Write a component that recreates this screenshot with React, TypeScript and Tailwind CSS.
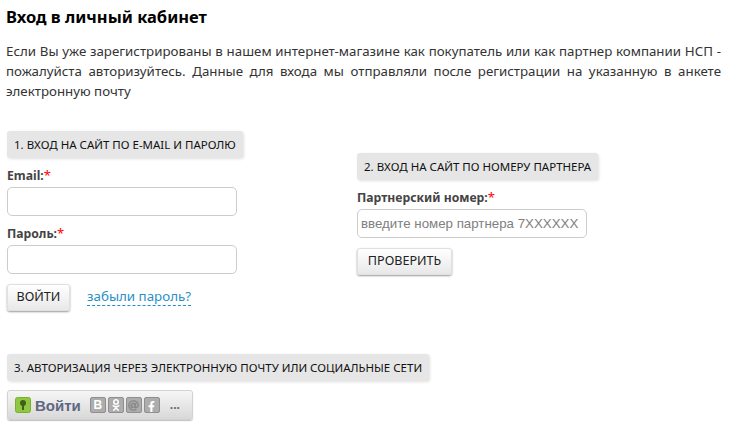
import type { ReactNode } from 'react'
import { FaAt, FaFacebookF, FaOdnoklassniki } from 'react-icons/fa'

const font = { fontFamily: '"Noto Sans", sans-serif' }

function SectionTitle({ children }: { children: string }) {
  return (
    <div className="inline-block h-[27px] rounded-[3px] bg-[#e6e6e6] px-[7px] text-[11.5px] leading-[27px] whitespace-nowrap text-[#111] shadow-[1px_1px_3px_rgba(0,0,0,0.12)]">
      {children}
    </div>
  )
}

function Field({ label, placeholder, className }: { label: string; placeholder?: string; className?: string }) {
  return (
    <div className={className}>
      <div className="h-[20px] text-[12.2px] leading-[21px] font-bold text-[#444]">
        {label}<span className="text-[13px] font-normal text-[#f00]">*</span>
      </div>
      <input
        placeholder={placeholder}
        className="mt-[2px] block h-[29px] w-[230px] rounded-[5px] border border-[#ccc] bg-white px-[3px] font-['Liberation_Sans'] text-[13.3px] text-[#333] placeholder:text-[#808080]"
      />
    </div>
  )
}

function Btn({ children, className }: { children: string; className: string }) {
  return (
    <button className={`h-[27px] rounded-[3px] border border-[#e0e0e0] bg-gradient-to-b from-white to-[#e8e8e8] text-[12.6px] text-[#222] shadow-[0_1px_2px_rgba(0,0,0,0.4)] ${className}`}>
      {children}
    </button>
  )
}

function SocialIcon({ children }: { children: ReactNode }) {
  return (
    <div className="flex h-[16px] w-[16px] items-center justify-center overflow-hidden rounded-[2px] border border-[#8f8f8f] bg-[#adadad] text-white">
      {children}
    </div>
  )
}

function LoginWidget() {
  return (
    <div className="flex h-[30px] w-[186px] items-center rounded-[3px] border border-[#d2d2d2] bg-gradient-to-b from-[#f6f6f6] to-[#d8d8d8] pl-[7px] shadow-[0_1px_1px_rgba(0,0,0,0.25)]">
      <svg width="16" height="16" viewBox="0 0 16 16">
        <rect x="0.5" y="0.5" width="15" height="15" rx="2" fill="#8fc73e" stroke="#7bae30" />
        <circle cx="8" cy="6" r="3" fill="#3f5f1e" />
        <rect x="7" y="7" width="2" height="6" fill="#3f5f1e" />
      </svg>
      <span className="ml-[4px] font-['Liberation_Sans'] text-[15px] leading-none font-bold text-[#5f6780]">Войти</span>
      <div className="ml-[9px] flex gap-[2px]">
        <SocialIcon>
          <span className="font-['Liberation_Sans'] text-[12px] leading-none font-bold">B</span>
        </SocialIcon>
        <SocialIcon>
          <FaOdnoklassniki size={12} />
        </SocialIcon>
        <SocialIcon>
          <FaAt size={11} className="text-[#8a8a8a]" />
        </SocialIcon>
        <SocialIcon>
          <FaFacebookF size={11} className="mt-[2px]" />
        </SocialIcon>
      </div>
      <span className="ml-[10px] text-[12px] leading-none font-bold text-[#666]">...</span>
    </div>
  )
}

export default function App() {
  return (
    <div className="h-[438px] w-[731px] overflow-hidden bg-white" style={font}>
      <h1 className="pt-[6px] pl-[6px] text-[16.5px] leading-[22px] font-bold text-black">Вход в личный кабинет</h1>
      <p className="mt-[13px] w-[721px] pl-[6px] text-justify text-[13.3px] leading-[20px] text-[#333]">
        Если Вы уже зарегистрированы в нашем интернет-магазине как покупатель или как партнер компании НСП - пожалуйста авторизуйтесь. Данные для входа мы отправляли после регистрации на указанную в анкете электронную почту
      </p>
      <div className="mt-[30px] flex pl-[7px]">
        <div className="w-[350px]">
          <SectionTitle>1. ВХОД НА САЙТ ПО E-MAIL И ПАРОЛЮ</SectionTitle>
          <Field label="Email:" className="mt-[7px]" />
          <Field label="Пароль:" className="mt-[7px]" />
          <div className="mt-[10px] flex items-center">
            <Btn className="w-[63px]">ВОЙТИ</Btn>
            <a className="mt-[-3px] ml-[17px] border-b border-dashed border-[#1b8fd0] text-[13.35px] leading-[18px] text-[#2a8fc5]">забыли пароль?</a>
          </div>
        </div>
        <div className="mt-[22px]">
          <SectionTitle>2. ВХОД НА САЙТ ПО НОМЕРУ ПАРТНЕРА</SectionTitle>
          <Field label="Партнерский номер:" placeholder="введите номер партнера 7XXXXXX" className="mt-[7px]" />
          <Btn className="mt-[10px] block w-[95px]">ПРОВЕРИТЬ</Btn>
        </div>
      </div>
      <div className="mt-[43px] pl-[7px]">
        <SectionTitle>3. АВТОРИЗАЦИЯ ЧЕРЕЗ ЭЛЕКТРОННУЮ ПОЧТУ ИЛИ СОЦИАЛЬНЫЕ СЕТИ</SectionTitle>
        <div className="mt-[9px]">
          <LoginWidget />
        </div>
      </div>
    </div>
  )
}
